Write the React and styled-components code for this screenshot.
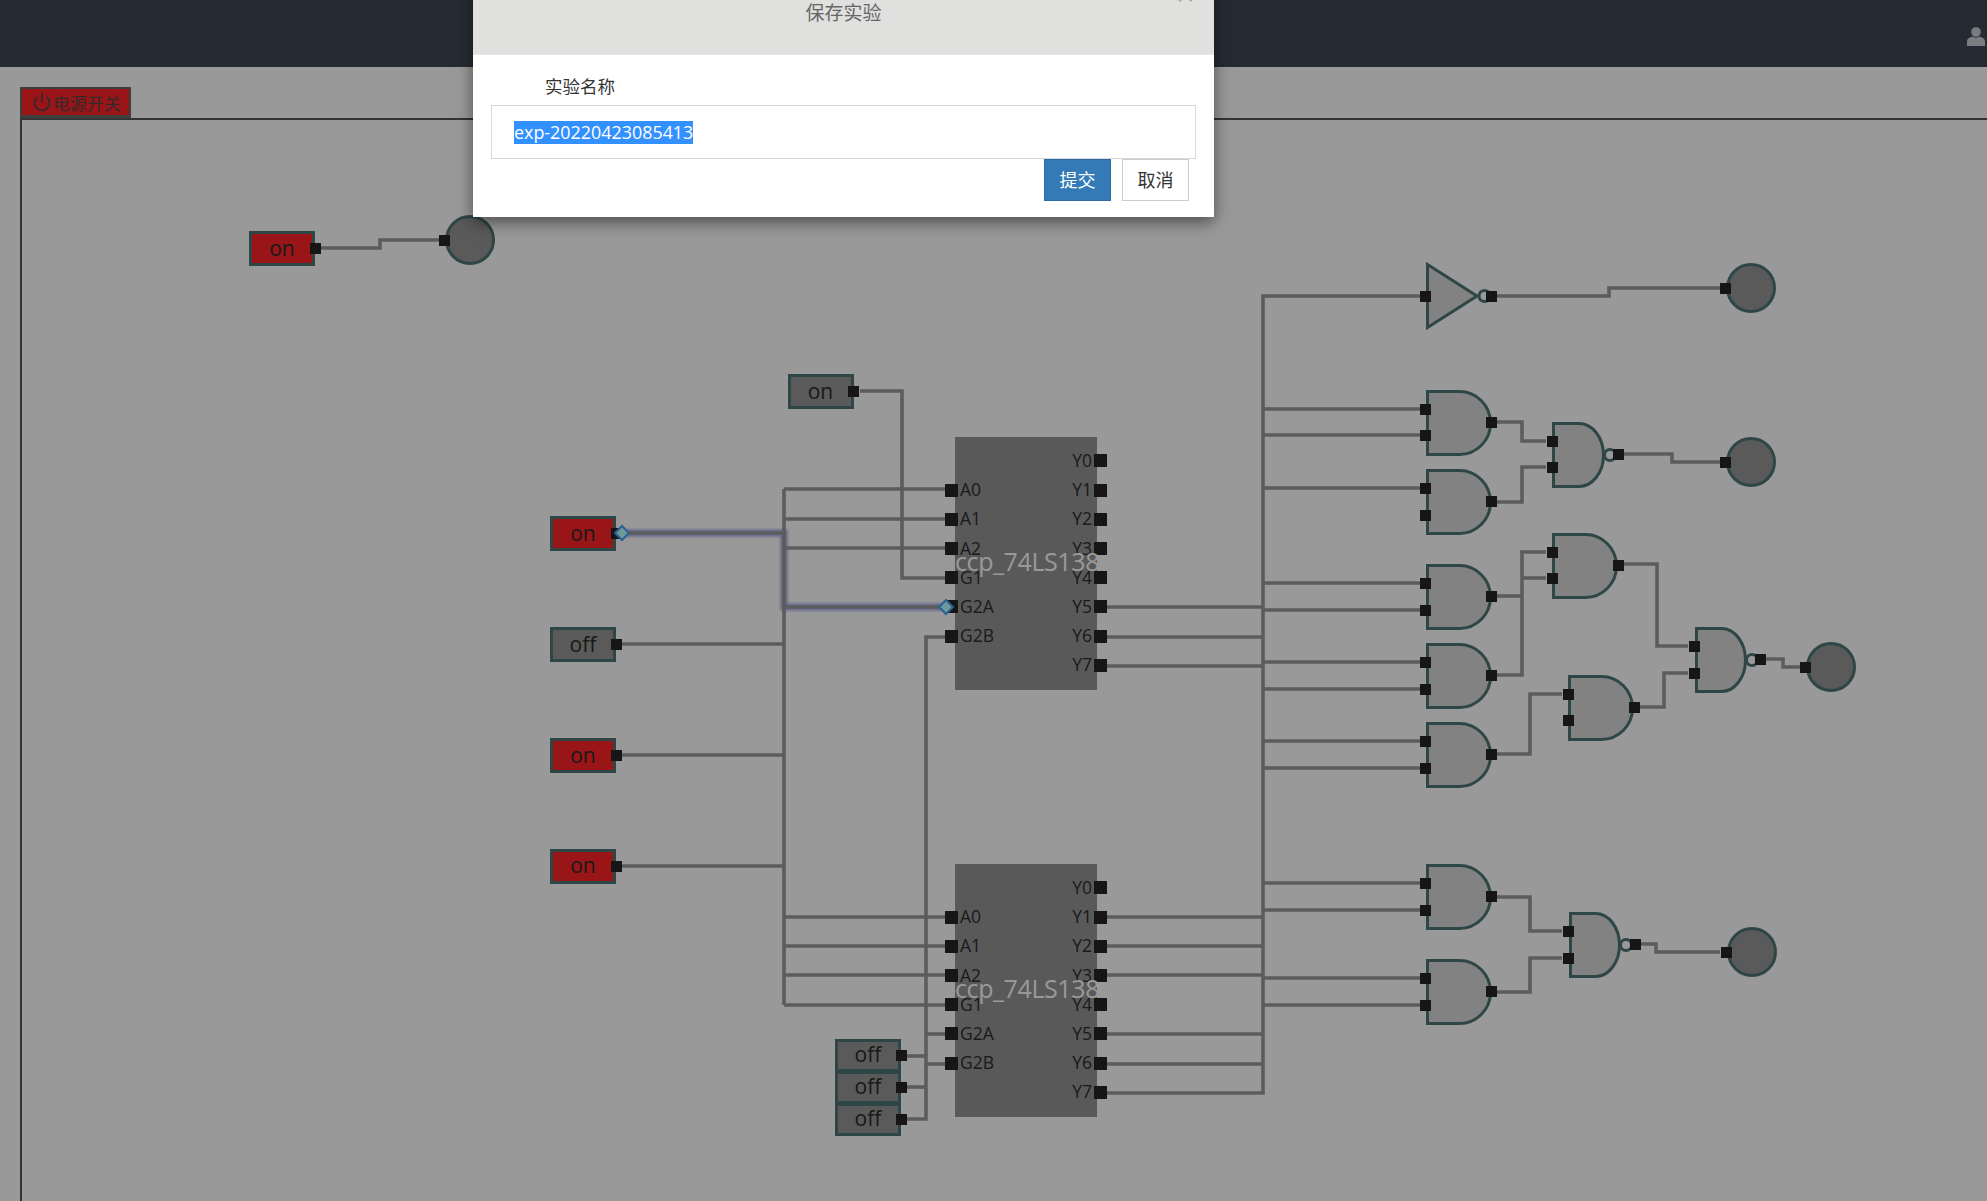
import React from "react";
import styled, { createGlobalStyle } from "styled-components";
import { Power } from "lucide-react";

const GlobalStyle = createGlobalStyle`
  html, body, #root {
    margin: 0;
    height: 100%;
  }
  body {
    overflow: hidden;
    background: #fff;
    font-family: "Open Sans", "Noto Sans CJK SC", sans-serif;
  }
`;

const Page = styled.div`
  position: relative;
  height: 100vh;
  display: flex;
  flex-direction: column;
  background: #ffffff;
  overflow: hidden;
`;

const TopBar = styled.header`
  flex: none;
  height: 67px;
  background: #404855;
  display: flex;
  align-items: center;
  justify-content: flex-end;
`;

const UserMark = styled.svg`
  width: 18px;
  height: 19px;
  margin: 5px 2px 0 0;
  fill: #cbd0d6;
`;

const Workspace = styled.main`
  flex: 1;
  display: flex;
  flex-direction: column;
  padding: 20px 0 0 20px;
  min-height: 0;
`;

const PowerTab = styled.button`
  flex: none;
  width: 111px;
  height: 31px;
  box-sizing: border-box;
  display: flex;
  align-items: center;
  gap: 1.5px;
  padding: 0 0 0 9.5px;
  border: 2px solid #6a6a6a;
  border-bottom-width: 3px;
  background: #ff2428;
  color: #5a4444;
  font: 17px/1 "Noto Sans CJK SC", sans-serif;
`;

const Canvas = styled.section`
  position: relative;
  flex: 1;
  border-top: 2px solid #555;
  border-left: 2px solid #555;
`;

/* everything on the board is addressed in page pixels, minus the board origin */
const OX = 22;
const OY = 120;

const Wires = styled.svg`
  position: absolute;
  left: 0;
  top: 0;
  width: 1965px;
  height: 1081px;
  overflow: visible;
`;

const Glow = styled.polyline`
  fill: none;
  stroke: #8f8ff0;
  stroke-opacity: 0.7;
  stroke-width: 7.5;
  filter: blur(1px);
`;

const Wire = styled.polyline`
  fill: none;
  stroke: #999;
  stroke-width: 3.6;
`;

const Node = styled.div`
  position: absolute;
  left: ${(p) => p.$x - OX}px;
  top: ${(p) => p.$y - OY}px;
`;

const portBlock = `
  content: "";
  position: absolute;
  width: 11px;
  height: 11px;
  background: #252525;
`;

const SwitchFace = styled.div`
  position: relative;
  box-sizing: border-box;
  width: 66px;
  height: ${(p) => p.$h || 35}px;
  display: flex;
  align-items: center;
  justify-content: center;
  padding-bottom: ${(p) => (p.$h ? 3 : 1)}px;
  border: 3px solid #4e7676;
  background: ${(p) => (p.$lit ? "#ff2428" : "#969696")};
  color: #2b2b2b;
  font-size: 21px;
  line-height: 1;
  &::after {
    ${portBlock}
    right: -8.5px;
    top: 50%;
    margin-top: -5.5px;
  }
  & + & {
    margin-top: -1px;
  }
`;

const SwitchStack = styled(Node)`
  display: flex;
  flex-direction: column;
`;

const Port = styled(Node)`
  width: 11px;
  height: 11px;
  margin-left: -5.5px;
  margin-top: -5.5px;
  background: #252525;
`;

const Chip = styled(Node)`
  box-sizing: border-box;
  width: 142px;
  height: 253px;
  padding-top: 9.4px;
  background: #949494;
  display: flex;
  justify-content: space-between;
`;

const ChipName = styled.span`
  position: absolute;
  left: 0;
  right: 0;
  top: 50%;
  margin-top: -20px;
  text-align: center;
  line-height: 34px;
  color: #fff;
  font-size: 25px;
  white-space: nowrap;
  letter-spacing: -0.4px;
`;

const PinColumn = styled.div`
  display: flex;
  flex-direction: column;
  padding-top: ${(p) => p.$skip || 0}px;
  margin: ${(p) => (p.$right ? "0 -10px 0 0" : "0 0 0 -10px")};
`;

const PinRow = styled.div`
  height: 29.2px;
  display: flex;
  align-items: center;
  gap: 2px;
  justify-content: ${(p) => (p.$right ? "flex-end" : "flex-start")};
`;

const PinBlock = styled.span`
  width: 13px;
  height: 13px;
  background: #252525;
`;

const PinLabel = styled.span`
  font-size: 17.5px;
  line-height: 20px;
  padding-bottom: 2px;
  color: #2d2d2d;
  white-space: nowrap;
`;

const GateShape = styled.svg`
  position: absolute;
  left: ${(p) => p.$x - OX}px;
  top: ${(p) => p.$y - OY}px;
  overflow: visible;
`;

const GateBody = styled.path`
  fill: #d9d9d9;
  stroke: #4e7676;
  stroke-width: 3;
`;

const Bubble = styled.circle`
  fill: none;
  stroke: #4e7676;
  stroke-width: 3;
`;

const LampFace = styled(Node)`
  box-sizing: border-box;
  width: 50px;
  height: 50px;
  margin: -25px 0 0 -25px;
  border: 3px solid #4e7676;
  border-radius: 50%;
  background: #969696;
  &::before {
    ${portBlock}
    left: -9px;
    top: 50%;
    margin-top: -5.5px;
  }
`;

const DiamondPath = styled.path`
  fill: #b4ffff;
  stroke: #4a9ff5;
  stroke-width: 2;
`;

/* modal backdrop + dialog */
const Backdrop = styled.div`
  position: absolute;
  inset: 0;
  background: rgba(0, 0, 0, 0.4);
`;

const Dialog = styled.div`
  position: absolute;
  left: 473px;
  top: -20px;
  width: 741px;
  height: 237px;
  display: flex;
  flex-direction: column;
  background: #fff;
  box-shadow: 0 5px 15px rgba(0, 0, 0, 0.5);
  font-family: "Noto Sans CJK SC", sans-serif;
`;

const DialogHead = styled.div`
  position: relative;
  flex: none;
  height: 75px;
  box-sizing: border-box;
  background: #e0e0de;
  border-bottom: 1px solid #e8e8e8;
  text-align: center;
  color: #666;
  font-size: 19px;
  line-height: 20px;
  padding-top: 22px;
`;

const CloseMark = styled.span`
  position: absolute;
  right: 18px;
  top: 4px;
  font-size: 21px;
  font-weight: 700;
  line-height: 21px;
  color: #aaa;
`;

const DialogBody = styled.div`
  flex: 1;
  display: flex;
  flex-direction: column;
  padding: 19px 18px 0 18px;
`;

const FieldLabel = styled.label`
  font-size: 17.5px;
  line-height: 24px;
  color: #333;
  padding-left: 54px;
  margin-bottom: 7px;
`;

const NameBox = styled.div`
  box-sizing: border-box;
  height: 54px;
  border: 1px solid #d8d8d8;
  padding-left: 22px;
  display: flex;
  align-items: center;
  font-family: "Open Sans", sans-serif;
  font-size: 17.9px;
`;

const Selected = styled.span`
  background: #3390ff;
  color: #fff;
  height: 23px;
  line-height: 23px;
  white-space: nowrap;
`;

const Actions = styled.div`
  display: flex;
  justify-content: flex-end;
  gap: 11px;
  padding-right: 7px;
`;

const Btn = styled.button`
  width: 67px;
  height: 42px;
  box-sizing: border-box;
  padding: 0 0 2px;
  font: 18px/1 "Noto Sans CJK SC", sans-serif;
  border: 1px solid ${(p) => (p.$primary ? "#2e6da4" : "#ccc")};
  background: ${(p) => (p.$primary ? "#337ab7" : "#fff")};
  color: ${(p) => (p.$primary ? "#fff" : "#333")};
`;

// wires in page coordinates
const wires = [
  "321,248 380,248 380,240 441,240",
  "860,391 902,391 902,578 945,578",
  "784,489 945,489",
  "784,519 945,519",
  "784,548 945,548",
  "784,489 784,1005",
  "621,644 784,644",
  "621,755 784,755",
  "621,866 784,866",
  "784,917 945,917",
  "784,946 945,946",
  "784,975 945,975",
  "784,1005 945,1005",
  "945,637 926,637 926,1119 906,1119",
  "926,1034 945,1034",
  "926,1064 945,1064",
  "906,1056 926,1056",
  "906,1087 926,1087",
  "1107,607 1263,607",
  "1107,637 1263,637",
  "1107,666 1263,666",
  "1107,917 1263,917",
  "1107,946 1263,946",
  "1107,975 1263,975",
  "1107,1034 1263,1034",
  "1107,1064 1263,1064",
  "1107,1093 1263,1093 1263,296 1420,296",
  "1497,296 1609,296 1609,288 1720,288",
  "1497,422 1522,422 1522,441 1546,441",
  "1497,502 1522,502 1522,467 1546,467",
  "1624,454 1672,454 1672,462 1720,462",
  "1497,596 1522,596",
  "1497,675 1522,675 1522,552 1546,552",
  "1522,578 1546,578",
  "1624,564 1657,564 1657,646 1688,646",
  "1497,754 1530,754 1530,694 1562,694",
  "1640,707 1664,707 1664,673 1688,673",
  "1766,659 1783,659 1783,667 1800,667",
  "1497,897 1530,897 1530,931 1562,931",
  "1497,992 1530,992 1530,958 1562,958",
  "1641,944 1656,944 1656,952 1720,952",
  ...[409, 435, 488, 583, 610, 662, 689, 741, 768, 883, 910, 978, 1005].map(
    (y) => `1263,${y} 1420,${y}`
  ),
];
const activeWire = "621,533 784,533 784,607 945,607";

const pt = (s) =>
  s
    .split(" ")
    .map((p) => {
      const [x, y] = p.split(",");
      return `${x - OX},${y - OY}`;
    })
    .join(" ");

const leftPins = ["A0", "A1", "A2", "G1", "G2A", "G2B"];
const rightPins = ["Y0", "Y1", "Y2", "Y3", "Y4", "Y5", "Y6", "Y7"];

function Decoder({ top }) {
  return (
    <Chip $x={955} $y={top}>
      <PinColumn $skip={29.2}>
        {leftPins.map((n) => (
          <PinRow key={n}>
            <PinBlock />
            <PinLabel>{n}</PinLabel>
          </PinRow>
        ))}
      </PinColumn>
      <PinColumn $right>
        {rightPins.map((n) => (
          <PinRow $right key={n}>
            <PinLabel>{n}</PinLabel>
            <PinBlock />
          </PinRow>
        ))}
      </PinColumn>
      <ChipName>ccp_74LS138</ChipName>
    </Chip>
  );
}

function AndGate({ x, y, w = 66, bubble, in1, in2, out }) {
  const rx = w / 2 - 2;
  return (
    <>
      <GateShape $x={x} $y={y - 0.5} width={w} height={66}>
        <GateBody d={`M1.5 1.5 H${w - 1.5 - rx} A${rx} 31.5 0 0 1 ${w - 1.5 - rx} 64.5 H1.5 Z`} />
        {bubble && <Bubble cx={w + 5} cy={33} r="5.5" />}
      </GateShape>
      <Port $x={x} $y={in1} />
      <Port $x={x} $y={in2} />
      <Port $x={out} $y={y + 32} />
    </>
  );
}

function Diamond({ x, y }) {
  return (
    <GateShape $x={x - 8} $y={y - 8} width={16} height={16}>
      <DiamondPath d="M8 1 L15 8 L8 15 L1 8 Z" />
    </GateShape>
  );
}

export default function App() {
  return (
    <Page>
      <GlobalStyle />
      <TopBar>
        <UserMark viewBox="0 0 18 19">
          <circle cx="9" cy="5" r="4.8" />
          <path d="M0 19 V14.5 C0 11.5 3 10.5 5.5 9.5 C7.5 11 10.5 11 12.5 9.5 C15 10.5 18 11.5 18 14.5 V19 Z" />
        </UserMark>
      </TopBar>
      <Workspace>
        <PowerTab>
          <Power size={20} strokeWidth={2.2} />
          电源开关
        </PowerTab>
        <Canvas>
          <Wires viewBox="0 0 1965 1081">
            <Glow points={pt(activeWire)} />
            {wires.map((w) => (
              <Wire key={w} points={pt(w)} />
            ))}
            <Wire points={pt(activeWire)} />
          </Wires>

          <Node $x={249} $y={231}>
            <SwitchFace $lit>on</SwitchFace>
          </Node>
          <LampFace $x={470} $y={240} />

          <Node $x={787.5} $y={374}>
            <SwitchFace>on</SwitchFace>
          </Node>

          <Node $x={550} $y={516}>
            <SwitchFace $lit>on</SwitchFace>
          </Node>
          <Node $x={550} $y={627}>
            <SwitchFace>off</SwitchFace>
          </Node>
          <Node $x={550} $y={738}>
            <SwitchFace $lit>on</SwitchFace>
          </Node>
          <Node $x={550} $y={848.5}>
            <SwitchFace $lit>on</SwitchFace>
          </Node>

          <SwitchStack $x={835} $y={1039}>
            <SwitchFace $h={33}>off</SwitchFace>
            <SwitchFace $h={33}>off</SwitchFace>
            <SwitchFace $h={33}>off</SwitchFace>
          </SwitchStack>

          <Decoder top={437} />
          <Decoder top={864} />

          <GateShape $x={1425.5} $y={262} width={70} height={68}>
            <GateBody d="M1.5 2.5 L51 34 L1.5 65.5 Z" />
            <Bubble cx="58.5" cy="34" r="5.5" />
          </GateShape>
          <Port $x={1425.5} $y={296} />
          <Port $x={1491.5} $y={296} />
          <LampFace $x={1751} $y={288} />

          <AndGate x={1425.5} y={390} in1={409} in2={435} out={1491.5} />
          <AndGate x={1425.5} y={469} in1={488} in2={515} out={1491.5} />
          <AndGate x={1425.5} y={564} in1={583} in2={610} out={1491.5} />
          <AndGate x={1425.5} y={643} in1={662} in2={689} out={1491.5} />
          <AndGate x={1425.5} y={722} in1={741} in2={768} out={1491.5} />
          <AndGate x={1425.5} y={864} in1={883} in2={910} out={1491.5} />
          <AndGate x={1425.5} y={959} in1={978} in2={1005} out={1491.5} />

          <AndGate x={1552} y={422} w={53} bubble in1={441} in2={467} out={1618.5} />
          <AndGate x={1552} y={533} in1={552} in2={578} out={1618} />
          <AndGate x={1568} y={675} in1={694} in2={720} out={1634} />
          <AndGate x={1694.5} y={627} w={52} bubble in1={646} in2={673} out={1760} />
          <AndGate x={1568.5} y={912} w={52} bubble in1={931} in2={958} out={1635} />

          <LampFace $x={1751} $y={462} />
          <LampFace $x={1830.5} $y={667} />
          <LampFace $x={1751.5} $y={952} />

          <Diamond x={622} y={533} />
          <Diamond x={946} y={607} />
        </Canvas>
      </Workspace>

      <Backdrop />
      <Dialog>
        <DialogHead>
          保存实验
          <CloseMark>×</CloseMark>
        </DialogHead>
        <DialogBody>
          <FieldLabel>实验名称</FieldLabel>
          <NameBox>
            <Selected>exp-20220423085413</Selected>
          </NameBox>
          <Actions>
            <Btn $primary>提交</Btn>
            <Btn>取消</Btn>
          </Actions>
        </DialogBody>
      </Dialog>
    </Page>
  );
}
